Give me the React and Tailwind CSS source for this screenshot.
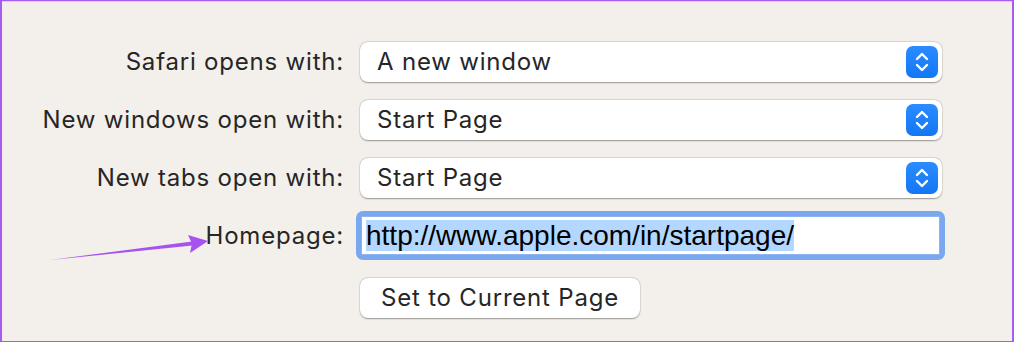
import React from 'react';

const font = { fontFamily: 'Inter, "Liberation Sans", sans-serif' };

const Stepper = () => (
  <div className="w-8 h-8 rounded-[7px] bg-gradient-to-b from-[#2a8cff] to-[#1277f5] flex items-center justify-center">
    <svg width="16" height="22" viewBox="0 0 16 22" fill="none" stroke="white" strokeWidth="2.4" strokeLinecap="round" strokeLinejoin="round">
      <path d="M3 8 L8 3 L13 8" />
      <path d="M3 14 L8 19 L13 14" />
    </svg>
  </div>
);

const PopUp = ({ value }) => (
  <div className="w-[582px] h-10 bg-white rounded-[8px] shadow-[0_0.5px_1.5px_rgba(0,0,0,0.35),0_0_0_0.5px_rgba(0,0,0,0.08)] flex items-center justify-between pl-[17px] pr-[4px]">
    <span className="text-[24px] tracking-[0.8px] text-[#262626] leading-none">{value}</span>
    <Stepper />
  </div>
);

const Row = ({ label, children }) => (
  <div className="flex items-center">
    <div className="w-[342px] text-right text-[24px] tracking-[0.8px] text-[#262626] leading-none whitespace-nowrap">{label}</div>
    <div className="ml-[16px]">{children}</div>
  </div>
);

export default function App() {
  return (
    <div
      className="w-[1014px] h-[342px] bg-[#f3efea] border-l-2 border-r-2 border-t border-b border-[#a95af2] relative overflow-hidden"
      style={font}
    >
      <div className="h-px bg-[#d9d6d2]" />
      {/* arrow pointing at Homepage */}
      <svg className="absolute left-0 top-0" width="260" height="300" viewBox="0 0 260 300">
        <path d="M48 259 L190 240.5 L190.6 244.6 Z" fill="#a652f0" />
        <path d="M206 240 L186 234 L190 242.5 L188 252 Z" fill="#a652f0" />
      </svg>

      <div className="flex flex-col pt-[40px]">
        <Row label="Safari opens with:">
          <PopUp value="A new window" />
        </Row>
        <div className="h-[18px]" />
        <Row label="New windows open with:">
          <PopUp value="Start Page" />
        </Row>
        <div className="h-[18px]" />
        <Row label="New tabs open with:">
          <PopUp value="Start Page" />
        </Row>
        <div className="h-[13px]" />
        <Row label="Homepage:">
          <div className="-ml-[4px] w-[589px] h-[49px] rounded-[7px] bg-[#7aa8f0] p-[5px]">
            <div className="w-full h-full bg-white border border-[#8fb3ec] flex items-center pl-[4px]">
              <span
                className="bg-[#b3d7ff] text-black text-[28px] leading-[31px] h-[31px]"
                style={{ fontFamily: '"Liberation Sans", Arial, sans-serif' }}
              >
                http://www.apple.com/in/startpage/
              </span>
            </div>
          </div>
        </Row>
        <div className="h-[18px]" />
        <Row label="">
          <button className="w-[280px] h-10 bg-white rounded-[8px] shadow-[0_0.5px_1.5px_rgba(0,0,0,0.35),0_0_0_0.5px_rgba(0,0,0,0.08)] text-left pl-[21px] text-[24px] tracking-[0.8px] text-[#262626] leading-none">
            Set to Current Page
          </button>
        </Row>
      </div>
    </div>
  );
}
